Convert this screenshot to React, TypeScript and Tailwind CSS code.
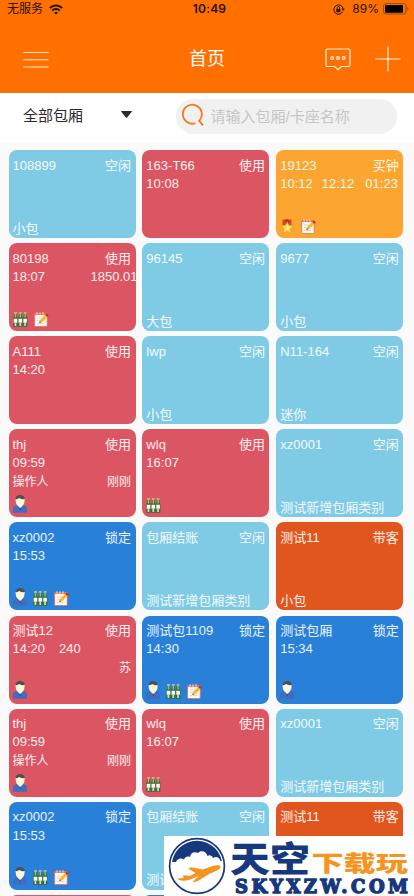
import type { ReactNode } from "react";

type Badge = "medal" | "beer" | "note" | "person";

type Room = {
  name: string;
  status: string;
  color: string;
  times?: string[];
  amount?: string;
  operator?: [string, string];
  category?: string;
  badges?: Badge[];
};

const IDLE = "bg-[#7fcae5]";
const IN_USE = "bg-[#db5562]";
const BOUGHT = "bg-[#fca531]";
const LOCKED = "bg-[#2980d8]";
const GUEST = "bg-[#e1561f]";

const thj: Room = { name: "thj", status: "使用", color: IN_USE, times: ["09:59"], operator: ["操作人", "刚刚"], badges: ["person"] };
const wlq: Room = { name: "wlq", status: "使用", color: IN_USE, times: ["16:07"], badges: ["beer"] };
const xz0001: Room = { name: "xz0001", status: "空闲", color: IDLE, category: "测试新增包厢类别" };
const xz0002: Room = { name: "xz0002", status: "锁定", color: LOCKED, times: ["15:53"], badges: ["person", "beer", "note"] };
const checkout: Room = { name: "包厢结账", status: "空闲", color: IDLE, category: "测试新增包厢类别" };
const test11: Room = { name: "测试11", status: "带客", color: GUEST, category: "小包" };
const test12: Room = { name: "测试12", status: "使用", color: IN_USE, times: ["14:20", "240"], operator: ["", "苏"], badges: ["person"] };
const test1109: Room = { name: "测试包1109", status: "锁定", color: LOCKED, times: ["14:30"], badges: ["person", "beer", "note"] };
const testRoom: Room = { name: "测试包厢", status: "锁定", color: LOCKED, times: ["15:34"], badges: ["person"] };

const rooms: Room[] = [
  { name: "108899", status: "空闲", color: IDLE, category: "小包" },
  { name: "163-T66", status: "使用", color: IN_USE, times: ["10:08"] },
  { name: "19123", status: "买钟", color: BOUGHT, times: ["10:12", "12:12", "01:23"], badges: ["medal", "note"] },
  { name: "80198", status: "使用", color: IN_USE, times: ["18:07"], amount: "1850.01", badges: ["beer", "note"] },
  { name: "96145", status: "空闲", color: IDLE, category: "大包" },
  { name: "9677", status: "空闲", color: IDLE, category: "小包" },
  { name: "A111", status: "使用", color: IN_USE, times: ["14:20"] },
  { name: "lwp", status: "空闲", color: IDLE, category: "小包" },
  { name: "N11-164", status: "空闲", color: IDLE, category: "迷你" },
  thj,
  wlq,
  xz0001,
  xz0002,
  checkout,
  test11,
  test12,
  test1109,
  testRoom,
  thj,
  wlq,
  xz0001,
  xz0002,
  checkout,
  test11,
  test12,
  test1109,
  testRoom
];

const badgeArt: Record<Badge, ReactNode> = {
  medal: (
    <>
      <path d="M2.5 .5h9v5.500h-9z" fill="#d8432c" />
      <path d="M5.600.5h3v6h-3z" fill="#a92f1e" />
      <path d="m7.200 2.800 1.900 3.600 4 .5-2.900 2.800.9 4.500-3.900-2.200-3.900 2.200.9-4.500-2.900-2.800 4-.5z" fill="#ffdc52" stroke="#e99d25" strokeWidth=".5" />
      <path d="m7.200 6 .9 2.100 2.100.2-1.600 1.400.5 2.100-1.900-1.200z" fill="#fff6ad" />
    </>
  ),
  beer: (
    <>
      {[0.2, 5, 9.8].map((x) => (
        <g key={x} transform={`translate(${x} 0)`}>
          <path d="M1 1h2.600v3l1 2v8.700H0V6l1-2z" fill="#3b6b35" />
          <path d="M.9.2h2.800v1.500H.9z" fill="#e5c49e" />
          <path d="M1.600 2H3v3.600H1.600z" fill="#8ac96b" />
          <path d="M.5 6.800h3.600v4H.5z" fill="#f5f8ed" />
          <path d="M1.400 11h1.700v3H1.400z" fill="#cfe0c0" />
        </g>
      ))}
    </>
  ),
  note: (
    <>
      <rect x=".6" y="1.600" width="12.600" height="13" rx="1" fill="#fff8f1" stroke="#f0684d" strokeWidth=".8" />
      <path d="M.6 1.300h12.600v1.700H.6z" fill="#ef674c" />
      <path d="M3 .2v2.600M6 .2v2.600M9 .2v2.600" stroke="#fff" strokeWidth=".8" />
      <path d="M3 6h5M3 8.400h3M3 11.500h7" stroke="#cad1df" strokeWidth=".8" />
      <path d="m5.300 11 .8-2.900 5.900-6 2.100 2.100-5.900 6z" fill="#f9b72f" />
      <path d="m5.300 11 .5-1.800 1.300 1.300z" fill="#6b5040" />
      <path d="m11.200 2.900 1.500-1.500 2.100 2.100-1.500 1.500z" fill="#bb3130" />
    </>
  ),
  person: (
    <>
      <path d="M0 17.800v-4.200c0-2.100 1.400-3.100 4.200-3.600h5.600c2.800.5 4.200 1.500 4.200 3.600v4.200z" fill="#426cbd" />
      <path d="m4.600 9.500 2.600 4.500 2.600-4.500z" fill="#e9f0fa" />
      <path d="m6.800 12.300 1.100.8-.5 2.400-1-1.700z" fill="#2b3f86" />
      <path d="M2.500 4.500C2.400 1.700 4.200 0 7 0s4.900 1.600 4.700 4.600z" fill="#4c5254" />
      <path d="M2.500 4.100c1.600.2 2.900-.5 3.700-1.200 1.500 1.100 3.400 1.400 5.500 1.200l-.4 3.700c-.6 2.400-2 3.900-4.100 3.900S3.500 10.200 2.900 7.800z" fill="#fff7da" />
    </>
  )
};

function BadgeIcon({ kind }: { kind: Badge }) {
  return kind === "person" ? (
    <svg className="h-[18px] w-[14px]" viewBox="0 0 14 18">{badgeArt.person}</svg>
  ) : (
    <svg className="h-[15px] w-[15px]" viewBox="0 0 15 15">{badgeArt[kind]}</svg>
  );
}

function RoomCard({ room }: { room: Room }) {
  return (
    <article className={`flex h-[88px] min-w-0 flex-col overflow-hidden rounded-[8px] pt-[6.3px] pr-[4.5px] pl-[4px] text-[13px] leading-[18.6px] text-white/90 ${room.color}`}>
      <div className="flex h-[18.6px] shrink-0 justify-between whitespace-nowrap">
        <span>{room.name}</span>
        <span>{room.status}</span>
      </div>
      <div className="flex h-[18.6px] shrink-0 whitespace-nowrap">
        {room.times?.map((time, index) => (
          <span key={time} className={index === 2 ? "ml-[11px]" : index === 1 ? (room.times?.length === 2 ? "ml-[14px]" : "ml-[9px]") : ""}>
            {time}
          </span>
        ))}
        {room.amount ? <span className="ml-[45.5px]">{room.amount}</span> : null}
      </div>
      <div className="flex h-[18.6px] shrink-0 justify-between text-[12px]">
        <span>{room.operator?.[0]}</span>
        <span>{room.operator?.[1]}</span>
      </div>
      {room.category ? <p className="mt-[7.4px] whitespace-nowrap">{room.category}</p> : null}
      {room.badges ? (
        <div className="mt-[3.300px] flex h-[18px] items-end gap-[6px]">
          {room.badges.map((badge) => (
            <BadgeIcon key={badge} kind={badge} />
          ))}
        </div>
      ) : null}
    </article>
  );
}

function StatusBar() {
  return (
    <div className="grid h-[18px] grid-cols-3 items-center pr-[5px] pl-[7px] text-[12px] leading-[18px] text-[#241204]">
      <div className="flex items-center gap-[6px]">
        <span>无服务</span>
        <svg className="h-[11px] w-[14px]" viewBox="0 0 14 11" fill="none" stroke="currentColor" strokeWidth="2">
          <path d="M.8 4.1C4.2.7 9.8.7 13.2 4.1M3.2 6.6c2.1-2.1 5.5-2.1 7.6 0" />
          <path d="m7 10.6-2-2c1.2-1 2.8-1 4 0z" fill="currentColor" stroke="none" />
        </svg>
      </div>
      <span className="pl-[3px] text-center font-['Inter'] font-semibold tracking-[0.2px]">10:49</span>
      <div className="flex items-center justify-end">
        <svg className="mr-[7px] h-[11px] w-[12px]" viewBox="0 0 12 11" fill="none" stroke="currentColor">
          <path d="M9.7 7.8A4.7 4.7 0 1 1 10.2 5" />
          <path d="m8.5 4.7 1.7 2 1.6-2z" fill="currentColor" stroke="none" />
          <path d="M3.4 5h4v3.2h-4z" fill="currentColor" stroke="none" />
          <path d="M4.2 5V3.7c0-1.6 2.4-1.6 2.4 0V5" strokeWidth=".8" />
        </svg>
        <span className="mr-[4px] font-['Inter']">89%</span>
        <svg className="h-[12px] w-[26px]" viewBox="0 0 26 12">
          <rect x=".5" y=".6" width="22.5" height="10.4" rx="2.4" fill="none" stroke="#9b4a0b" />
          <rect x="2" y="2" width="18" height="7.7" rx=".8" fill="#000" />
          <path d="M24.3 4c1.7.5 1.7 3.2 0 3.7z" fill="#9b4a0b" />
        </svg>
      </div>
    </div>
  );
}

function Header() {
  return (
    <header className="h-[93px] bg-[#ff7000]">
      <StatusBar />
      <div className="grid h-[75px] grid-cols-3 items-center pr-[13px] pb-[1px] pl-[23px] text-white">
        <svg className="mt-[8px] h-[17px] w-[26px]" viewBox="0 0 26 17" stroke="#fff" strokeOpacity=".85">
          <path d="M.5 1.5h25M.5 8.8h25M.5 16h25" />
        </svg>
        <h1 className="mt-[7px] pr-[10px] text-center text-[18px] leading-6">首页</h1>
        <div className="mt-[8px] flex items-center justify-end gap-[24px]">
          <svg className="h-[23px] w-[26px]" viewBox="0 0 26 23" fill="none" stroke="#fff" strokeOpacity=".9" strokeWidth="1.2">
            <path d="M2.5 1h21c1 0 1.5.6 1.5 1.5V17c0 1-.6 1.5-1.5 1.5h-7.2L13 21.7l-3.3-3.2H2.5C1.6 18.5 1 18 1 17V2.5C1 1.6 1.5 1 2.5 1z" />
            <circle cx="7.3" cy="10" r="1.4" />
            <circle cx="13" cy="10" r="1.4" />
            <circle cx="18.7" cy="10" r="1.4" />
          </svg>
          <svg className="h-[26px] w-[26px]" viewBox="0 0 26 26" stroke="#fff" strokeOpacity=".9" strokeWidth="1.2">
            <path d="M13 .5v25M.5 13h25" />
          </svg>
        </div>
      </div>
    </header>
  );
}

function FilterBar() {
  return (
    <div className="flex h-[49px] bg-white pt-[5.5px] pl-[23px]">
      <div className="flex h-[36px] w-[109px] items-center justify-between text-[15px] text-[#2b2b2b]">
        <span>全部包厢</span>
        <svg className="mb-[5px] h-[7px] w-[11px]" viewBox="0 0 11 7">
          <path d="M0 .6Q0 0 .7 0h9.6q.7 0 .7.6L6.1 6.6q-.6.6-1.2 0z" fill="#2b2b2b" />
        </svg>
      </div>
      <div className="ml-[44px] flex h-[35px] w-[221px] items-center rounded-full bg-[#f1f1f1] pl-[6px] text-[15px] text-[#c6c6c8]">
        <svg className="mr-[5.5px] mb-[4px] h-[23px] w-[23px]" viewBox="0 0 23 23" fill="none" stroke="#f5781b" strokeWidth="1.8" strokeLinecap="round">
          <path d="M12.8 20.4A9.5 9.5 0 1 1 17.2 17.8M17.2 17.8l3.400 4" />
        </svg>
        <span className="pt-[2px] whitespace-nowrap">请输入包厢/卡座名称</span>
      </div>
    </div>
  );
}

function SiteMark() {
  return (
    <div className="absolute right-0 bottom-0 flex h-[60px] w-[250px] bg-white">
      <svg className="h-[60px] w-[250px]" viewBox="0 0 250 60">
        <defs>
          <clipPath id="sky">
            <circle cx="33" cy="30" r="25.3" />
          </clipPath>
        </defs>
        <circle cx="33" cy="30" r="27.4" fill="#fff" stroke="#16387d" strokeWidth="1.7" />
        <path
          clipPath="url(#sky)"
          fill="#16387d"
          d="M0 0h66v26l-9.500-1c-1-4-5-5-7.500-3-1-3-4-3.500-5.500-2-1-5-7-6-9.500-3-4-2-7.500 0-8 4-3-1-5 0-6 2.500-3-2-7-.500-8 2.500H0z"
        />
        <path
          fill="#f7941d"
          d="M13 42.500 20 42l-1.500-2.500 2.500-.3 5 .8 5.500-3-7.500-4.500 3.500-1.200 11.500 2.200 9.500-3.500c3.500-1.100 7.500-1.200 8 .3.300 2-2.500 4-6 5.400l-5 2L33 45.500l-4.500.5 6-6-9 3.700c-5 1.700-10 1.400-12.500-1.200z"
        />
        <g fontFamily="'Noto Sans CJK SC', sans-serif" fontWeight="900">
          <text transform="translate(66 35.500) scale(1.140 1)" fontSize="35" fill="#16387d">天空</text>
          <text transform="translate(147.500 35.300) scale(1.460 1)" fontSize="22" fill="#f7941d">下载玩</text>
        </g>
        <text
          transform="translate(71 57)"
          fontFamily="'DejaVu Serif', serif"
          fontWeight="700"
          fontSize="18"
          textLength="173"
          lengthAdjust="spacing"
          fill="#16387d"
          stroke="#16387d"
          strokeWidth="1.400"
        >
          SKYXZW.COM
        </text>
      </svg>
    </div>
  );
}

export default function App() {
  return (
    <main className="relative h-[896px] w-[414px] overflow-hidden bg-[#fafafa] font-['Liberation_Sans','Noto_Sans_CJK_SC',sans-serif]">
      <Header />
      <FilterBar />
      <section className="grid grid-cols-3 gap-x-[6.8px] gap-y-[5.06px] pt-[8.3px] pr-[10.7px] pl-[8.5px]">
        {rooms.map((room, index) => (
          <RoomCard key={index} room={room} />
        ))}
      </section>
      <SiteMark />
    </main>
  );
}
